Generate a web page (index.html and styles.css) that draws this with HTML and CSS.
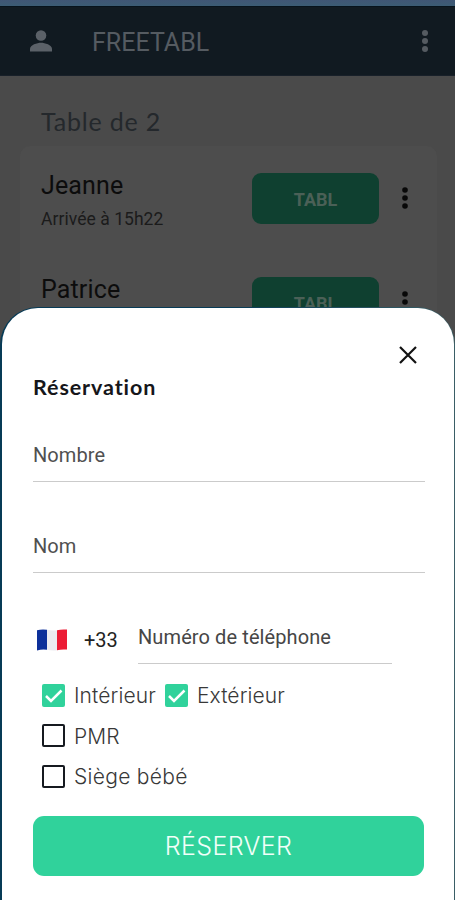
FILE: index.html
```html
<!DOCTYPE html>
<html lang="fr">
<head>
<meta charset="utf-8">
<title>Freetabl</title>
<link rel="stylesheet" href="styles.css">
</head>
<body>
<div class="app">
  <div class="status"></div>
  <header class="bar">
    <svg class="user" viewBox="0 0 22 22"><circle cx="11" cy="5.5" r="5.3"/><path d="M0 21.5v-2.6C0 15 7.2 12.8 11 12.8s11 2.2 11 6.1v2.6z"/></svg>
    <span class="brand">FREETABL</span>
    <svg class="more more-light" viewBox="0 0 8 24"><circle cx="4" cy="4" r="3"/><circle cx="4" cy="12" r="3"/><circle cx="4" cy="20" r="3"/></svg>
  </header>
  <h2 class="section">Table de 2</h2>
  <div class="card">
    <div class="row">
      <div class="who"><div class="name">Jeanne</div><div class="when">Arrivée à 15h22</div></div>
      <div class="tabl">TABL</div>
      <svg class="more" viewBox="0 0 8 24"><circle cx="4" cy="4" r="2.800"/><circle cx="4" cy="12" r="2.800"/><circle cx="4" cy="20" r="2.800"/></svg>
    </div>
    <div class="row">
      <div class="who"><div class="name">Patrice</div></div>
      <div class="tabl">TABL</div>
      <svg class="more" viewBox="0 0 8 24"><circle cx="4" cy="4" r="2.800"/><circle cx="4" cy="12" r="2.800"/><circle cx="4" cy="20" r="2.800"/></svg>
    </div>
  </div>
</div>
<div class="edge"></div>
<main class="sheet">
  <div class="close"><svg viewBox="0 0 18 18"><path d="M1 1l16 16M17 1L1 17"/></svg></div>
  <h1 class="title">Réservation</h1>
  <div class="field">Nombre</div>
  <div class="field second">Nom</div>
  <div class="phone">
    <svg class="flag" viewBox="0 0 30 22"><path fill="#0d309a" d="M0 1.200Q5 0 10 .8v20Q5 20 0 21.500z"/><path fill="#ececf0" d="M10 .8q5 1 10 .4v20q-5 .6-10-.4z"/><path fill="#ec1c35" d="M20 1.200q5-1.200 10-.6v20q-5-.6-10 .6z"/></svg>
    <span class="code">+33</span>
    <div class="number">Numéro de téléphone</div>
  </div>
  <div class="checks">
    <div class="line">
      <svg class="box on" viewBox="0 0 23 23"><rect width="23" height="23" rx="2"/><path d="M4 12l5 5L19.500 6.500"/></svg><span class="lab interieur">Intérieur</span>
      <svg class="box on" viewBox="0 0 23 23"><rect width="23" height="23" rx="2"/><path d="M4 12l5 5L19.500 6.500"/></svg><span class="lab exterieur">Extérieur</span>
    </div>
    <div class="line"><svg class="box" viewBox="0 0 23 23"><rect x="1" y="1" width="21" height="21" rx="1"/></svg><span class="lab pmr">PMR</span></div>
    <div class="line"><svg class="box" viewBox="0 0 23 23"><rect x="1" y="1" width="21" height="21" rx="1"/></svg><span class="lab siege">Siège bébé</span></div>
  </div>
  <div class="submit">RÉSERVER</div>
</main>
</body>
</html>
```
FILE: styles.css
```css
* { box-sizing: border-box; }
body { margin: 0; height: 900px; overflow: hidden; position: relative; background: #4a4a4a; font-family: Roboto, sans-serif; }
svg { display: block; flex: none; }
h1, h2 { margin: 0; }
.status { height: 6px; background: linear-gradient(#405675, #3c5c74); }
.bar { height: 70px; background: #111a21; border-top: 1px solid #07131c; border-bottom: 1px solid #182029; display: flex; align-items: center; padding: 0 26px 0 30px; }
.user { width: 22px; height: 22px; fill: #5b6168; }
.brand { margin-left: 40px; flex: 1; font-size: 25px; color: #555b61; line-height: 30px; padding-top: 3px; }
.more { width: 8px; height: 24px; fill: #080808; }
.more-light { fill: #555b61; }
.section { height: 70px; padding: 30px 0 0 41px; font: 400 25px/30px Lato, sans-serif; letter-spacing: .8px; color: #24282c; }
.card { margin: 0 18px 0 20px; height: 200px; border-radius: 10px; background: #4d4d4d; padding: 0 28px 0 21px; }
.row { height: 104px; display: flex; align-items: center; }
.who { flex: 1; height: 60px; }
.name { font-size: 25px; line-height: 30px; color: #0c0c0c; padding-top: 3px; letter-spacing: .15px; }
.when { font-size: 17.500px; line-height: 24px; margin-top: 6px; color: #1b1b1b; letter-spacing: .05px; }
.tabl { width: 127px; height: 51px; border-radius: 9px; background: #0f4030; display: flex; align-items: center; justify-content: center; color: #4b6057; font-weight: 700; font-size: 18px; padding-top: 2px; margin-right: 22px; }
.edge { position: absolute; left: 0; right: 0; top: 307px; bottom: 0; border-radius: 38px 38px 0 0; background: linear-gradient(90deg, #073b56 0 50%, #3a5f66); }
.sheet { position: absolute; left: 2px; right: 1px; top: 308px; bottom: 0; background: #fff; border-radius: 36px 36px 0 0; padding: 38px 29px 0 31px; }
.close { display: flex; justify-content: flex-end; padding-right: 8px; }
.close svg { width: 18px; height: 18px; fill: none; stroke: #111; stroke-width: 2.200; }
.title { margin-top: 9px; height: 29px; font: 700 21.500px/28px Lato, sans-serif; color: #16161a; letter-spacing: .9px; }
.field { height: 80px; padding-top: 41px; line-height: 24px; font-size: 20px; color: #505050; border-bottom: 1px solid #cbcbcb; letter-spacing: .1px; }
.second { height: 91px; padding-top: 52px; }
.phone { height: 91px; display: flex; padding: 0 33px 0 4px; }
.flag { width: 30px; height: 22px; margin-top: 56px; }
.code { width: 54px; margin: 55px 0 0 17px; font-size: 20px; line-height: 24px; color: #222; }
.number { flex: 1; padding-top: 52px; border-bottom: 1px solid #cbcbcb; font-size: 20px; line-height: 24px; color: #464646; letter-spacing: .1px; }
.checks { padding: 11px 0 0 9px; }
.line { height: 40.500px; display: flex; align-items: center; }
.box { width: 23px; height: 23px; fill: #fff; stroke: #161a20; stroke-width: 2; }
.on rect { fill: #30d29b; stroke: none; }
.on path { fill: none; stroke: #fff; stroke-width: 2.500; }
.lab { font: 300 21px/28px Inter, sans-serif; color: #383838; margin-left: 9px; padding-top: 2px; letter-spacing: .1px; white-space: nowrap; }
.interieur { width: 91px; }
.siege { letter-spacing: .3px; }
.submit { margin-top: 19px; width: 391px; height: 60px; border-radius: 11px; background: #30d29b; color: #f1fff9; display: flex; align-items: center; justify-content: center; font: 300 25px/30px Inter, sans-serif; letter-spacing: .4px; }
```
